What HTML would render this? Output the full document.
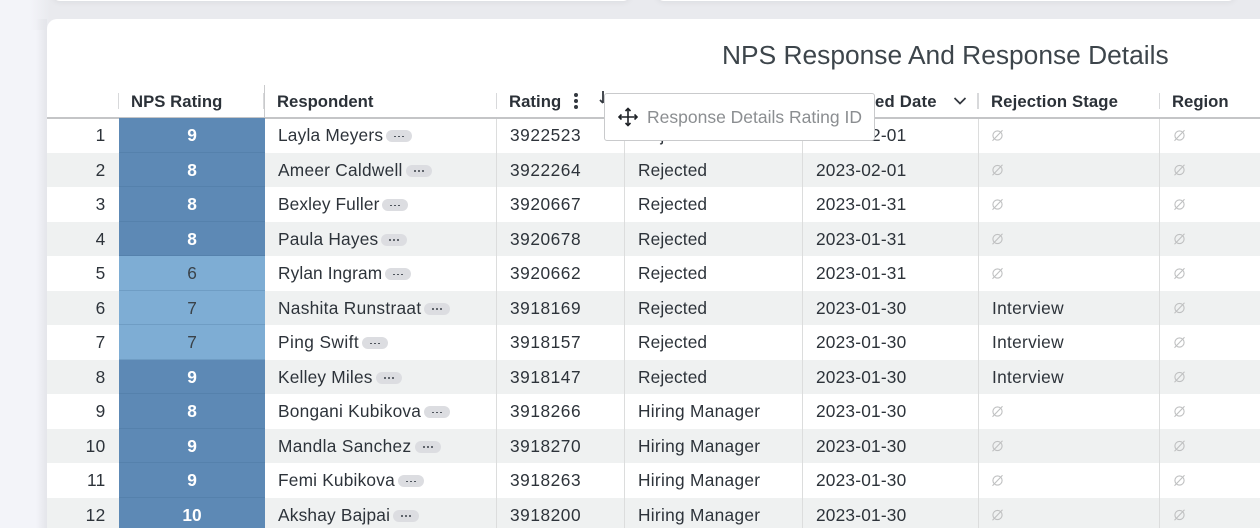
<!DOCTYPE html>
<html><head><meta charset="utf-8">
<style>
html,body{margin:0;padding:0;width:1260px;height:528px;overflow:hidden;background:#f3f4f9;}
body{position:relative;font-family:"Liberation Sans",sans-serif;color:#2d333a;}
.band{position:absolute;left:30px;top:0;width:1230px;height:30px;background:linear-gradient(90deg,rgba(233,234,238,0) 0,#e9eaee 20px);}
.sh{position:absolute;left:36px;top:19px;width:11px;height:509px;background:linear-gradient(90deg,rgba(225,226,232,0) 0,#e4e5ea 100%);}
.top1,.top2{position:absolute;top:-10px;height:10.5px;background:#fff;border-radius:0 0 8px 8px;box-shadow:0 2px 6px rgba(0,0,0,.05);}
.top1{left:52px;width:579px;}
.top2{left:656px;width:580px;}
.card{position:absolute;left:47px;top:19px;width:1240px;height:509px;background:#fff;border-radius:10px 10px 0 0;}
.title{position:absolute;left:722px;top:39.5px;font-size:26.35px;line-height:30px;color:#3d454b;white-space:nowrap;}
.hline{position:absolute;left:47px;top:117px;width:1213px;height:1.5px;background:#c4c5c7;}
.h{position:absolute;top:91.5px;font-size:16.7px;line-height:20px;font-weight:bold;color:#2b3138;white-space:nowrap;letter-spacing:.05px;}
.hs{position:absolute;top:93px;width:1px;height:16px;background:#d8d9db;}
.r{position:absolute;left:47px;width:1213px;height:34.5px;}
.alt{background:#eff1f1;}
.n{position:absolute;left:0;width:1260px;height:34.5px;}
.c{position:absolute;font-size:17.3px;line-height:34.5px;white-space:nowrap;color:#2d333a;}
.i{text-align:right;width:58.5px;left:47px;letter-spacing:.3px;}
.v{width:146px;height:34.5px;text-align:center;background:#5d89b5;color:#fff;font-weight:bold;box-shadow:inset 0 -1px 0 rgba(60,100,140,.22);}
.v.l{background:#7eadd4;color:#3a4249;font-weight:normal;}
.t{letter-spacing:.12px;}
.d{letter-spacing:.2px;}
.m{letter-spacing:.55px;}
.k{letter-spacing:.3px;}
.p{display:inline-block;width:26px;height:12px;border-radius:6px;background:#dcdde1;vertical-align:-1px;margin-left:3px;position:relative;}
.p:after{content:"";position:absolute;left:8px;top:5.500px;width:2px;height:1.500px;border-radius:1px;background:#3a4048;box-shadow:4px 0 0 #3a4048,8px 0 0 #3a4048;}
.vl{position:absolute;top:118px;width:1px;height:410px;background:#dcdddd;}
.pop{position:absolute;left:604px;top:93px;width:269px;height:46px;background:#fff;border:1px solid #c9cacc;border-radius:3px;}
.poptxt{position:absolute;left:42px;top:13px;font-size:17.5px;line-height:20px;color:#8b8e91;white-space:nowrap;}
svg{position:absolute;}
</style></head>
<body>
<div class="band"></div>
<div class="sh"></div>
<div class="top1"></div><div class="top2"></div>
<div class="card"></div>
<div class="title">NPS Response And Response Details</div>

<div class="r" style="top:118px"></div>
<div class="r alt" style="top:152.5px"></div>
<div class="r" style="top:187px"></div>
<div class="r alt" style="top:221.5px"></div>
<div class="r" style="top:256px"></div>
<div class="r alt" style="top:290.5px"></div>
<div class="r" style="top:325px"></div>
<div class="r alt" style="top:359.5px"></div>
<div class="r" style="top:394px"></div>
<div class="r alt" style="top:428.5px"></div>
<div class="r" style="top:463px"></div>
<div class="r alt" style="top:497.5px"></div>

<div class="vl" style="left:496px"></div>
<div class="vl" style="left:624px"></div>
<div class="vl" style="left:802px"></div>
<div class="vl" style="left:978px"></div>
<div class="vl" style="left:1159px"></div>

<div class="hline"></div>
<div class="hs" style="left:118px"></div>
<div class="hs" style="left:263px"></div>
<div class="hs" style="left:264px;top:85px;height:32px;background:#c9cacc"></div>
<div class="hs" style="left:496px"></div>
<div class="hs" style="left:977px;width:2px"></div>
<div class="hs" style="left:1159px"></div>
<div class="h" style="left:131px">NPS Rating</div>
<div class="h" style="left:277px;letter-spacing:0">Respondent</div>
<div class="h" style="left:509px">Rating</div>
<div class="h" style="left:875px;letter-spacing:.2px">ed Date</div>
<div class="h" style="left:991px;letter-spacing:.12px">Rejection Stage</div>
<div class="h" style="left:1172px;letter-spacing:0">Region</div>
<svg style="left:570px;top:91px" width="12" height="20" viewBox="0 0 12 20"><circle cx="6" cy="4" r="2" fill="#33383f"/><circle cx="6" cy="10" r="2" fill="#33383f"/><circle cx="6" cy="16" r="2" fill="#33383f"/></svg>
<svg style="left:598px;top:90px" width="10" height="16" viewBox="0 0 10 16"><path d="M5 1V13M2 10L5 13" stroke="#33383f" stroke-width="1.8" fill="none"/></svg>
<svg style="left:953px;top:96px" width="14" height="10" viewBox="0 0 14 10"><path d="M1.5 2L7 7.5L12.5 2" stroke="#33383f" stroke-width="1.7" fill="none"/></svg>

<div class="n" style="top:118px"><div class="c i">1</div><div class="c v" style="left:119px">9</div><div class="c t" style="left:278px;letter-spacing:.2px">Layla Meyers<span class="p"></span></div><div class="c m" style="left:510px">3922523</div><div class="c t" style="left:638px">Rejected</div><div class="c d" style="left:816px">2023-02-01</div></div>
<div class="n" style="top:152.5px"><div class="c i">2</div><div class="c v" style="left:119px">8</div><div class="c t" style="left:278px;letter-spacing:.26px">Ameer Caldwell<span class="p"></span></div><div class="c m" style="left:510px">3922264</div><div class="c t" style="left:638px">Rejected</div><div class="c d" style="left:816px">2023-02-01</div></div>
<div class="n" style="top:187px"><div class="c i">3</div><div class="c v" style="left:119px">8</div><div class="c t" style="left:278px">Bexley Fuller<span class="p"></span></div><div class="c m" style="left:510px">3920667</div><div class="c t" style="left:638px">Rejected</div><div class="c d" style="left:816px">2023-01-31</div></div>
<div class="n" style="top:221.5px"><div class="c i">4</div><div class="c v" style="left:119px">8</div><div class="c t" style="left:278px;letter-spacing:.22px">Paula Hayes<span class="p"></span></div><div class="c m" style="left:510px">3920678</div><div class="c t" style="left:638px">Rejected</div><div class="c d" style="left:816px">2023-01-31</div></div>
<div class="n" style="top:256px"><div class="c i">5</div><div class="c v l" style="left:119px">6</div><div class="c t" style="left:278px">Rylan Ingram<span class="p"></span></div><div class="c m" style="left:510px">3920662</div><div class="c t" style="left:638px">Rejected</div><div class="c d" style="left:816px">2023-01-31</div></div>
<div class="n" style="top:290.5px"><div class="c i">6</div><div class="c v l" style="left:119px">7</div><div class="c t" style="left:278px;letter-spacing:.3px">Nashita Runstraat<span class="p"></span></div><div class="c m" style="left:510px">3918169</div><div class="c t" style="left:638px">Rejected</div><div class="c d" style="left:816px">2023-01-30</div><div class="c k" style="left:992px">Interview</div></div>
<div class="n" style="top:325px"><div class="c i">7</div><div class="c v l" style="left:119px">7</div><div class="c t" style="left:278px;letter-spacing:.42px">Ping Swift<span class="p"></span></div><div class="c m" style="left:510px">3918157</div><div class="c t" style="left:638px">Rejected</div><div class="c d" style="left:816px">2023-01-30</div><div class="c k" style="left:992px">Interview</div></div>
<div class="n" style="top:359.5px"><div class="c i">8</div><div class="c v" style="left:119px">9</div><div class="c t" style="left:278px;letter-spacing:.2px">Kelley Miles<span class="p"></span></div><div class="c m" style="left:510px">3918147</div><div class="c t" style="left:638px">Rejected</div><div class="c d" style="left:816px">2023-01-30</div><div class="c k" style="left:992px">Interview</div></div>
<div class="n" style="top:394px"><div class="c i">9</div><div class="c v" style="left:119px">8</div><div class="c t" style="left:278px;letter-spacing:.24px">Bongani Kubikova<span class="p"></span></div><div class="c m" style="left:510px">3918266</div><div class="c k" style="left:638px">Hiring Manager</div><div class="c d" style="left:816px">2023-01-30</div></div>
<div class="n" style="top:428.5px"><div class="c i">10</div><div class="c v" style="left:119px">9</div><div class="c t" style="left:278px;letter-spacing:.34px">Mandla Sanchez<span class="p"></span></div><div class="c m" style="left:510px">3918270</div><div class="c k" style="left:638px">Hiring Manager</div><div class="c d" style="left:816px">2023-01-30</div></div>
<div class="n" style="top:463px"><div class="c i">11</div><div class="c v" style="left:119px">9</div><div class="c t" style="left:278px;letter-spacing:.2px">Femi Kubikova<span class="p"></span></div><div class="c m" style="left:510px">3918263</div><div class="c k" style="left:638px">Hiring Manager</div><div class="c d" style="left:816px">2023-01-30</div></div>
<div class="n" style="top:497.5px;height:30.5px;overflow:hidden"><div class="c i">12</div><div class="c v" style="left:119px">10</div><div class="c t" style="left:278px;letter-spacing:.2px">Akshay Bajpai<span class="p"></span></div><div class="c m" style="left:510px">3918200</div><div class="c k" style="left:638px">Hiring Manager</div><div class="c d" style="left:816px">2023-01-30</div></div>

<svg style="left:0;top:0" width="1260" height="528" viewBox="0 0 1260 528" fill="none" stroke="#bfc0c1" stroke-width="1.1">
<defs><g id="z"><circle cx="0" cy="0" r="4.6"/><path d="M-5 5.200L5 -5.200"/></g></defs>
<use href="#z" x="997.500" y="135.500"/><use href="#z" x="1179.500" y="135.500"/>
<use href="#z" x="997.500" y="170"/><use href="#z" x="1179.500" y="170"/>
<use href="#z" x="997.500" y="204.500"/><use href="#z" x="1179.500" y="204.500"/>
<use href="#z" x="997.500" y="239"/><use href="#z" x="1179.500" y="239"/>
<use href="#z" x="997.500" y="273.500"/><use href="#z" x="1179.500" y="273.500"/>
<use href="#z" x="1179.500" y="308"/>
<use href="#z" x="1179.500" y="342.500"/>
<use href="#z" x="1179.500" y="377"/>
<use href="#z" x="997.500" y="411.500"/><use href="#z" x="1179.500" y="411.500"/>
<use href="#z" x="997.500" y="446"/><use href="#z" x="1179.500" y="446"/>
<use href="#z" x="997.500" y="480.500"/><use href="#z" x="1179.500" y="480.500"/>
<use href="#z" x="997.500" y="515"/><use href="#z" x="1179.500" y="515"/>
</svg>

<div class="pop"><div class="poptxt">Response Details Rating ID</div>
<svg style="left:13px;top:13px" width="20" height="20" viewBox="0 0 20 20"><path d="M10 1.500V18.500M1 10H19" stroke="#1d2126" stroke-width="1.6" fill="none"/><path d="M7.500 4L10 1.500L12.500 4M7.500 16L10 18.500L12.500 16M3.500 7.500L1 10L3.500 12.500M16.500 7.500L19 10L16.500 12.500" stroke="#1d2126" stroke-width="1.6" fill="none"/></svg>
</div>
</body></html>
